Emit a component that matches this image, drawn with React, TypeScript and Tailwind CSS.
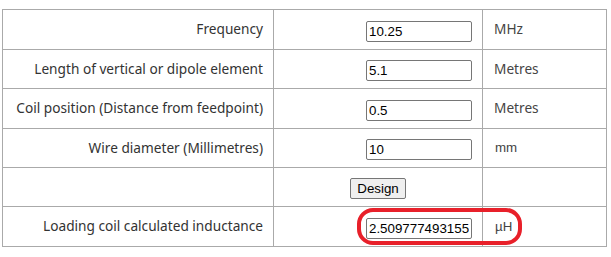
import React from 'react';

const rows = [
  { label: 'Frequency', value: '10.25', unit: 'MHz', unitFont: 'label', h: 'h-[40px]' },
  { label: 'Length of vertical or dipole element', value: '5.1', unit: 'Metres', unitFont: 'label', h: 'h-[39px]' },
  { label: 'Coil position (Distance from feedpoint)', value: '0.5', unit: 'Metres', unitFont: 'label', h: 'h-[40px]' },
  { label: 'Wire diameter (Millimetres)', value: '10', unit: 'mm', unitFont: 'arial', h: 'h-[39px]' },
];

const labelFont = "font-['Noto_Sans',sans-serif] text-[13.67px]";
const arialFont = "font-['Liberation_Sans',Arial,sans-serif]";

const cell = 'border border-[#aaaaaa] p-0';

const Field: React.FC<{ value: string }> = ({ value }) => (
  <input
    readOnly
    value={value}
    className={`w-[106px] h-[21px] border border-[#767676] rounded-[2px] px-[2px] py-0 leading-[19px] text-[13.33px] text-black bg-white outline-none align-middle ${arialFont}`}
  />
);

const App: React.FC = () => {
  return (
    <div className="bg-white w-[611px] h-[257px] pt-[9px] pl-[2px]">
      <table className="border-collapse w-[605px]">
        <tbody>
          {rows.map((r) => (
            <tr key={r.label} className={r.h}>
              <td className={`${cell} w-[271px] text-right pr-[10px] text-[#333] ${labelFont}`}>{r.label}</td>
              <td className={`${cell} w-[209px] text-right pr-[10px]`}>
                <Field value={r.value} />
              </td>
              <td
                className={`${cell} text-[#444] ${r.unitFont === 'arial' ? `${arialFont} text-[13.33px] pl-[12px]` : `${labelFont} pl-[11px]`}`}
              >
                {r.unit}
              </td>
            </tr>
          ))}
          <tr className="h-[39px]">
            <td className={cell}></td>
            <td className={`${cell} text-center`}>
              <button
                className={`h-[21px] px-[6px] border border-[#767676] rounded-[2px] bg-[#efefef] text-[13.33px] text-black align-middle ${arialFont}`}
              >
                Design
              </button>
            </td>
            <td className={cell}></td>
          </tr>
          <tr className="h-[40px]">
            <td className={`${cell} text-right pr-[10px] text-[#333] ${labelFont}`}>Loading coil calculated inductance</td>
            <td className={`${cell} text-right pr-[10px]`}>
              <Field value="2.509777493155" />
            </td>
            <td className={`${cell} pl-[12px] text-[#444] text-[13.33px] relative ${arialFont}`}>
              µH
              <div className="absolute left-[-126px] top-[1px] w-[165px] h-[37px] border-[4px] border-[#e8202a] rounded-[16px] pointer-events-none" />
            </td>
          </tr>
        </tbody>
      </table>
    </div>
  );
};

export default App;
